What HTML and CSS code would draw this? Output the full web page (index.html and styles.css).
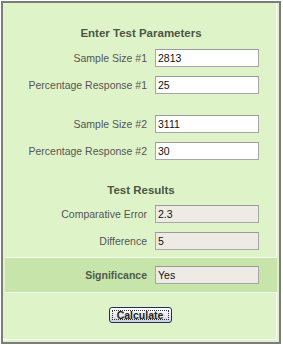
FILE: index.html
```html
<!DOCTYPE html>
<html>
<head>
<meta charset="utf-8">
<link rel="stylesheet" href="styles.css">
</head>
<body>
<div class="panel">
  <div class="heading h1">Enter Test Parameters</div>
  <div class="row"><label class="lbl">Sample Size #1</label><input class="field" value="2813"></div>
  <div class="row r2"><label class="lbl">Percentage Response #1</label><input class="field" value="25"></div>
  <div class="row r3"><label class="lbl">Sample Size #2</label><input class="field" value="3111"></div>
  <div class="row r2"><label class="lbl">Percentage Response #2</label><input class="field" value="30"></div>
  <div class="heading h2">Test Results</div>
  <div class="row r5"><label class="lbl">Comparative Error</label><input class="field out" value="2.3" readonly></div>
  <div class="row r2"><label class="lbl">Difference</label><input class="field out" value="5" readonly></div>
  <div class="band">
    <div class="row"><label class="lbl sig">Significance</label><input class="field out" value="Yes" readonly></div>
  </div>
  <div class="actions"><button class="btn">Calculate</button></div>
</div>
</body>
</html>
```
FILE: styles.css
```css
html, body {
  margin: 0;
  padding: 0;
  background: #ffffff;
}
body {
  font-family: "Liberation Sans", Arial, sans-serif;
}
.panel {
  margin: 1px;
  width: 280px;
  height: 343px;
  box-sizing: border-box;
  border: 2px solid #7c7c7c;
  background: #dff3c9;
  box-shadow: inset -2px -2px 0 #dff3c9, inset -3px -3px 0 #ffffff;
  padding-top: 22px;
  display: flex;
  flex-direction: column;
}
.heading {
  height: 16px;
  line-height: 16px;
  text-align: center;
  font-weight: bold;
  font-size: 11.5px;
  color: #4b5745;
}
.h1 {
  margin-bottom: 8px;
}
.h2 {
  margin-top: 22px;
  margin-bottom: 7px;
}
.row {
  display: grid;
  grid-template-columns: 144px 104px;
  column-gap: 8px;
  align-items: center;
  height: 18px;
}
.r2 {
  margin-top: 9px;
}
.r3 {
  margin-top: 21px;
}
.lbl {
  text-align: right;
  font-size: 10.5px;
  color: #555555;
  white-space: nowrap;
}
.sig {
  font-weight: bold;
  color: #505a4a;
  font-size: 10.5px;
}
.field {
  box-sizing: border-box;
  width: 104px;
  height: 18px;
  margin: 0;
  padding: 0 2px;
  border: 1px solid #a6a6a6;
  border-top-color: #9a9a9a;
  background: #ffffff;
  font-family: "Liberation Sans", Arial, sans-serif;
  font-size: 10.5px;
  color: #111111;
  outline: none;
}
.out {
  background: #eeebe5;
}
.band {
  margin: 7px 2px 0 2px;
  background: #c7e5ab;
  border-top: 1px solid #f4fbec;
  border-bottom: 1px solid #f4fbec;
  padding: 8px 0 8px 0;
  margin-left: 2px;
}
.band .row {
  grid-template-columns: 142px 104px;
}
.actions {
  display: flex;
  justify-content: center;
  margin-top: 14px;
  padding-right: 2px;
}
.btn {
  box-sizing: border-box;
  width: 63px;
  height: 16px;
  margin: 0;
  padding: 0;
  border: 1px solid #1f2f5c;
  border-radius: 3px;
  background: linear-gradient(#ffffff, #e4e6ee 60%, #cdd1de);
  font-family: "Liberation Sans", Arial, sans-serif;
  font-weight: bold;
  font-size: 10.5px;
  color: #222222;
  outline: 1px dotted #333333;
  outline-offset: -4px;
  line-height: 14px;
}
```
